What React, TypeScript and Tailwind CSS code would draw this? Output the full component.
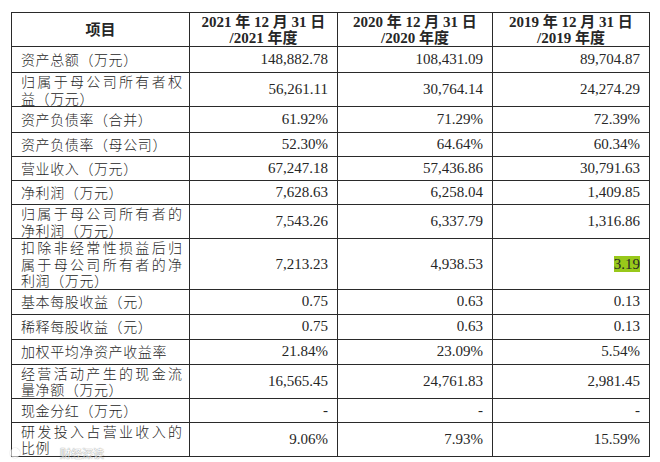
const rows: { label: string[]; v: string[]; h: number }[] = [
  { label: ["资产总额（万元）"], v: ["148,882.78", "108,431.09", "89,704.87"], h: 26 },
  { label: ["归属于母公司所有者权", "益（万元）"], v: ["56,261.11", "30,764.14", "24,274.29"], h: 33 },
  { label: ["资产负债率（合并）"], v: ["61.92%", "71.29%", "72.39%"], h: 26 },
  { label: ["资产负债率（母公司）"], v: ["52.30%", "64.64%", "60.34%"], h: 24 },
  { label: ["营业收入（万元）"], v: ["67,247.18", "57,436.86", "30,791.63"], h: 24 },
  { label: ["净利润（万元）"], v: ["7,628.63", "6,258.04", "1,409.85"], h: 24 },
  { label: ["归属于母公司所有者的", "净利润（万元）"], v: ["7,543.26", "6,337.79", "1,316.86"], h: 34 },
  { label: ["扣除非经常性损益后归", "属于母公司所有者的净", "利润（万元）"], v: ["7,213.23", "4,938.53", "3.19"], h: 50 },
  { label: ["基本每股收益（元）"], v: ["0.75", "0.63", "0.13"], h: 25 },
  { label: ["稀释每股收益（元）"], v: ["0.75", "0.63", "0.13"], h: 25 },
  { label: ["加权平均净资产收益率"], v: ["21.84%", "23.09%", "5.54%"], h: 25 },
  { label: ["经营活动产生的现金流", "量净额（万元）"], v: ["16,565.45", "24,761.83", "2,981.45"], h: 34 },
  { label: ["现金分红（万元）"], v: ["-", "-", "-"], h: 24 },
  { label: ["研发投入占营业收入的", "比例"], v: ["9.06%", "7.93%", "15.59%"], h: 34 },
];

const years = ["2021", "2020", "2019"];

export default function App() {
  return (
    <div className="relative w-[660px] h-[462px] bg-white pt-[12px] pl-[11px] text-[#262626]">
      <table className="table-fixed border-collapse w-[638px]">
        <colgroup>
          <col className="w-[178px]" />
          <col className="w-[148px]" />
          <col className="w-[155px]" />
          <col className="w-[157px]" />
        </colgroup>
        <thead>
          <tr className="h-[34px]">
            <th className="border-[1.5px] border-[#2a2a2a] text-[15px] font-bold font-['Noto_Sans_CJK_SC',sans-serif]">
              项目
            </th>
            {years.map((y) => (
              <th
                key={y}
                className="border-[1.5px] border-[#2a2a2a] text-[15px] leading-[16px] font-bold font-['Liberation_Serif','Noto_Sans_CJK_SC',serif]"
              >
                <div>{y} 年 12 月 31 日</div>
                <div>/{y} 年度</div>
              </th>
            ))}
          </tr>
        </thead>
        <tbody>
          {rows.map((r, i) => (
            <tr key={i} style={{ height: r.h }}>
              <td className="border-[1.5px] border-[#2a2a2a] pl-[9px] pr-[7px] text-[14px] leading-[16.5px] tracking-[0.6px] font-light font-['Noto_Sans_CJK_SC',sans-serif]">
                {r.label.map((l, j) => (
                  <div
                    key={j}
                    className={j < r.label.length - 1 ? "[text-align-last:justify] tracking-normal" : ""}
                  >
                    {l}
                  </div>
                ))}
              </td>
              {r.v.map((v, k) => (
                <td
                  key={k}
                  className="border-[1.5px] border-[#2a2a2a] pr-[9px] text-right text-[15px] font-['Liberation_Serif',serif]"
                >
                  {v === "3.19" ? <span className="bg-[#98c81a]">{v}</span> : v}
                </td>
              ))}
            </tr>
          ))}
        </tbody>
      </table>
      <div className="absolute left-[10px] top-[447px] flex items-center opacity-60">
        <div className="w-[10px] h-[10px] rounded-full border-2 border-white shadow-[0_0_1px_#555]" />
        <span className="ml-[40px] text-[11px] leading-[12px] text-white font-['Noto_Sans_CJK_SC',sans-serif] [text-shadow:0_0_1px_#555,0_0_1px_#555]">
          财经深读
        </span>
      </div>
    </div>
  );
}
